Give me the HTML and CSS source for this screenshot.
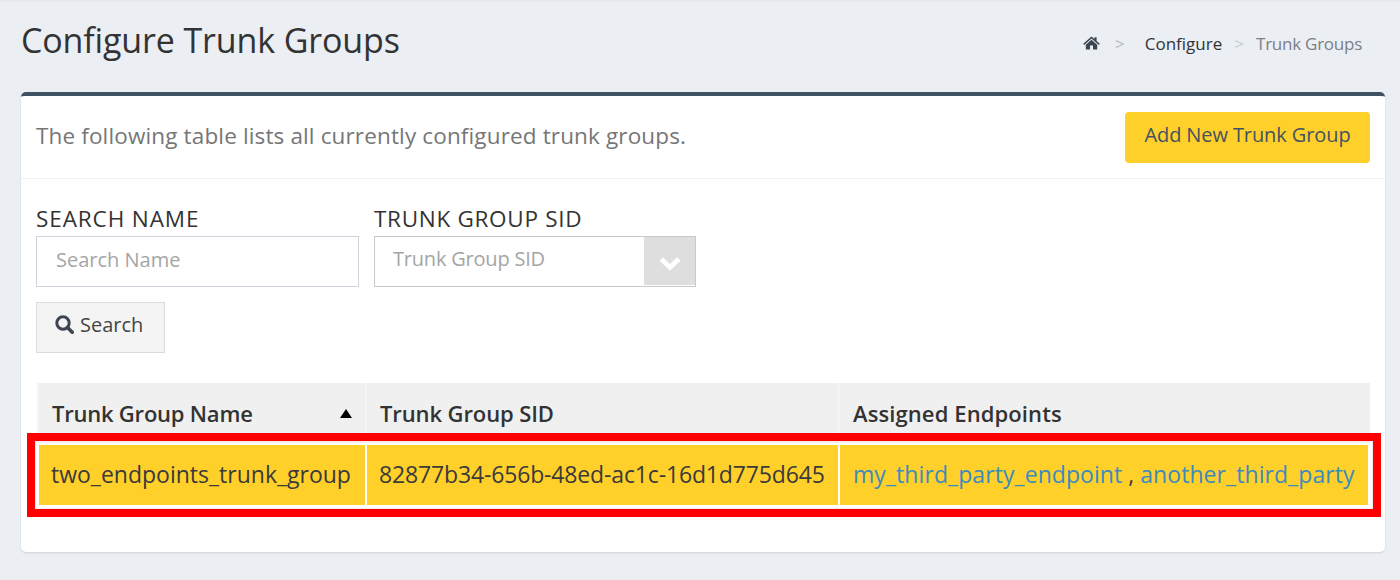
FILE: index.html
```html
<!DOCTYPE html>
<html lang="en">
<head>
<meta charset="utf-8">
<title>Configure Trunk Groups</title>
<link rel="stylesheet" href="styles.css">
</head>
<body>
<header class="page-head">
  <h1 class="title">Configure Trunk Groups</h1>
  <nav class="crumbs">
    <svg class="home" viewBox="0 0 17 14" width="17" height="14"><path fill="#3d4650" d="M8.5 0.4 L11.4 3 V1.3 H13.6 V5 L16.8 7.8 L15.8 8.9 L8.5 2.6 L1.2 8.9 L0.2 7.8 Z M8.5 3.8 L14.2 8.7 V13.6 H10 V9.6 H7 V13.6 H2.8 V8.7 Z"/></svg>
    <span class="sep sep-a">&gt;</span>
    <a class="crumb">Configure</a>
    <span class="sep sep-b">&gt;</span>
    <span class="crumb-current">Trunk Groups</span>
  </nav>
</header>
<main class="card">
  <div class="card-head">
    <p class="lead">The following table lists all currently configured trunk groups.</p>
    <button class="btn-add">Add New Trunk Group</button>
  </div>
  <div class="card-body">
    <form class="filters">
      <div class="field field-name">
        <label class="label label-name">SEARCH NAME</label>
        <div class="input">Search Name</div>
      </div>
      <div class="field field-sid">
        <label class="label">TRUNK GROUP SID</label>
        <div class="select">
          <span class="select-text">Trunk Group SID</span>
          <span class="select-arrow">
            <svg viewBox="0 0 22 15" width="22" height="15"><path fill="none" stroke="#fff" stroke-width="4.8" d="M2.2 3 L11 11.4 L19.8 3"/></svg>
          </span>
        </div>
      </div>
    </form>
    <button class="btn-search">
      <svg viewBox="0 0 19 19" width="19" height="19"><circle cx="8" cy="8" r="6.2" fill="none" stroke="#3d4650" stroke-width="3"/><path d="M12.5 12.5 L17.2 17.2" stroke="#3d4650" stroke-width="3.6" stroke-linecap="round"/></svg>
      Search
    </button>
    <div class="table-wrap">
      <table class="grid">
        <thead>
          <tr>
            <th class="col-name"><span class="th-in">Trunk Group Name<i class="sort"></i></span></th>
            <th class="col-sid">Trunk Group SID</th>
            <th class="col-end">Assigned Endpoints</th>
          </tr>
        </thead>
        <tbody>
          <tr>
            <td>two_endpoints_trunk_group</td>
            <td class="cell-sid">82877b34-656b-48ed-ac1c-16d1d775d645</td>
            <td class="cell-end"><a class="link">my_third_party_endpoint</a> , <a class="link">another_third_party</a></td>
          </tr>
        </tbody>
      </table>
      <div class="highlight"></div>
    </div>
  </div>
</main>
</body>
</html>
```
FILE: styles.css
```css
* { box-sizing: border-box; }
html, body { margin: 0; padding: 0; }
body {
  width: 1400px;
  height: 580px;
  overflow: hidden;
  background: #ebeef3;
  border-top: 2px solid #e6e8ec;
  font-family: "Open Sans", "Liberation Sans", sans-serif;
  color: #333;
}
.page-head {
  display: flex;
  justify-content: space-between;
  height: 90px;
  padding: 0 38px 0 21px;
}
.title {
  margin: 17px 0 0;
  font-size: 34px;
  line-height: 42px;
  font-weight: 400;
  letter-spacing: -0.14px;
  color: #333;
}
.crumbs {
  display: flex;
  align-items: center;
  height: 24px;
  margin-top: 29px;
  font-size: 17px;
}
.home { margin: 0 15px 0 0; }
.sep { color: #b4b8c0; font-size: 17px; }
.sep-a { margin-right: 20px; }
.sep-b { margin: 0 12px; color: #c8ccd2; }
.crumb { color: #333; }
.crumb-current { color: #7b7f87; letter-spacing: -0.25px; }
.card {
  margin-left: 21px;
  width: 1364px;
  height: 460px;
  background: #fff;
  border-top: 4px solid #3f5263;
  border-radius: 5px;
  box-shadow: 0 1px 2px rgba(0, 0, 0, 0.12);
}
.card-head {
  display: flex;
  justify-content: space-between;
  align-items: center;
  height: 83px;
  padding: 0 15px;
  border-bottom: 1px solid #f2f2f2;
}
.lead {
  margin: 0 0 3px;
  font-size: 22.5px;
  letter-spacing: 0.14px;
  color: #767676;
}
.btn-add {
  width: 245px;
  height: 51px;
  padding: 0 0 6px;
  background: #ffd02a;
  border: 0;
  border-radius: 4px;
  font: inherit;
  font-size: 20px;
  letter-spacing: -0.1px;
  color: #465261;
}
.card-body { padding: 0 15px; }
.filters {
  display: flex;
  gap: 15px;
  padding-top: 26px;
}
.field-name { width: 323px; }
.field-sid { width: 322px; }
.label {
  display: block;
  height: 31px;
  font-size: 22.5px;
  letter-spacing: 0.7px;
  line-height: 27px;
  color: #333;
}
.label-name { letter-spacing: 0.9px; }
.input, .select {
  height: 51px;
  border: 1px solid #cfd3de;
  color: #a5a5a5;
  font-size: 20px;
}
.input {
  padding: 0 19px;
  line-height: 45px;
}
.select {
  display: flex;
  justify-content: space-between;
  border-color: #c9c9cd;
  padding-left: 18px;
  line-height: 44px;
  letter-spacing: -0.2px;
}
.select-arrow {
  display: flex;
  align-items: center;
  justify-content: center;
  width: 51px;
  height: 48px;
  background: #dedede;
  padding-top: 4px;
}
.btn-search {
  display: flex;
  align-items: center;
  gap: 6px;
  margin-top: 15px;
  width: 129px;
  height: 51px;
  padding: 0 0 6px 18px;
  background: #f4f4f4;
  border: 1px solid #dcdcdc;
  font: inherit;
  font-size: 20px;
  color: #444;
}
.table-wrap {
  position: relative;
  margin: 30px 0 0 1px;
  width: 1333px;
}
.grid {
  width: 100%;
  table-layout: fixed;
  border-collapse: separate;
  border-spacing: 0;
  font-size: 23px;
}
.col-name { width: 328px; }
.col-sid { width: 473px; }
.grid th {
  height: 60px;
  padding: 0 14px 0 13px;
  text-align: left;
  font-size: 22px;
  font-weight: 600;
  letter-spacing: -0.1px;
  background: #f0f0f0;
  border-left: 2px solid #f5f5f5;
  color: #333;
}
.grid .col-name { letter-spacing: -0.22px; }
.grid .col-end { letter-spacing: 0.1px; }
.th-in {
  display: flex;
  justify-content: space-between;
  align-items: center;
}
.sort {
  width: 0;
  height: 0;
  margin-right: -1px;
  border-left: 6px solid transparent;
  border-right: 6px solid transparent;
  border-bottom: 9px solid #000;
}
.grid td {
  height: 64px;
  padding: 0 12px 3px;
  background: #ffd02a;
  background-clip: padding-box;
  border: 2px solid #fff;
  border-right: 0;
  color: #3a3a3a;
  white-space: nowrap;
}
.grid td:last-child { border-right: 2px solid #fff; }
.grid .cell-sid { letter-spacing: -0.15px; }
.grid .cell-end { padding-left: 13px; }
.link { color: #3b8bbf; letter-spacing: 0.07px; }
.highlight {
  position: absolute;
  left: -10px;
  top: 50px;
  width: 1354px;
  height: 84px;
  border: 8px solid #f00;
  box-shadow: inset 0 0 0 1px #eee;
  pointer-events: none;
}
```
